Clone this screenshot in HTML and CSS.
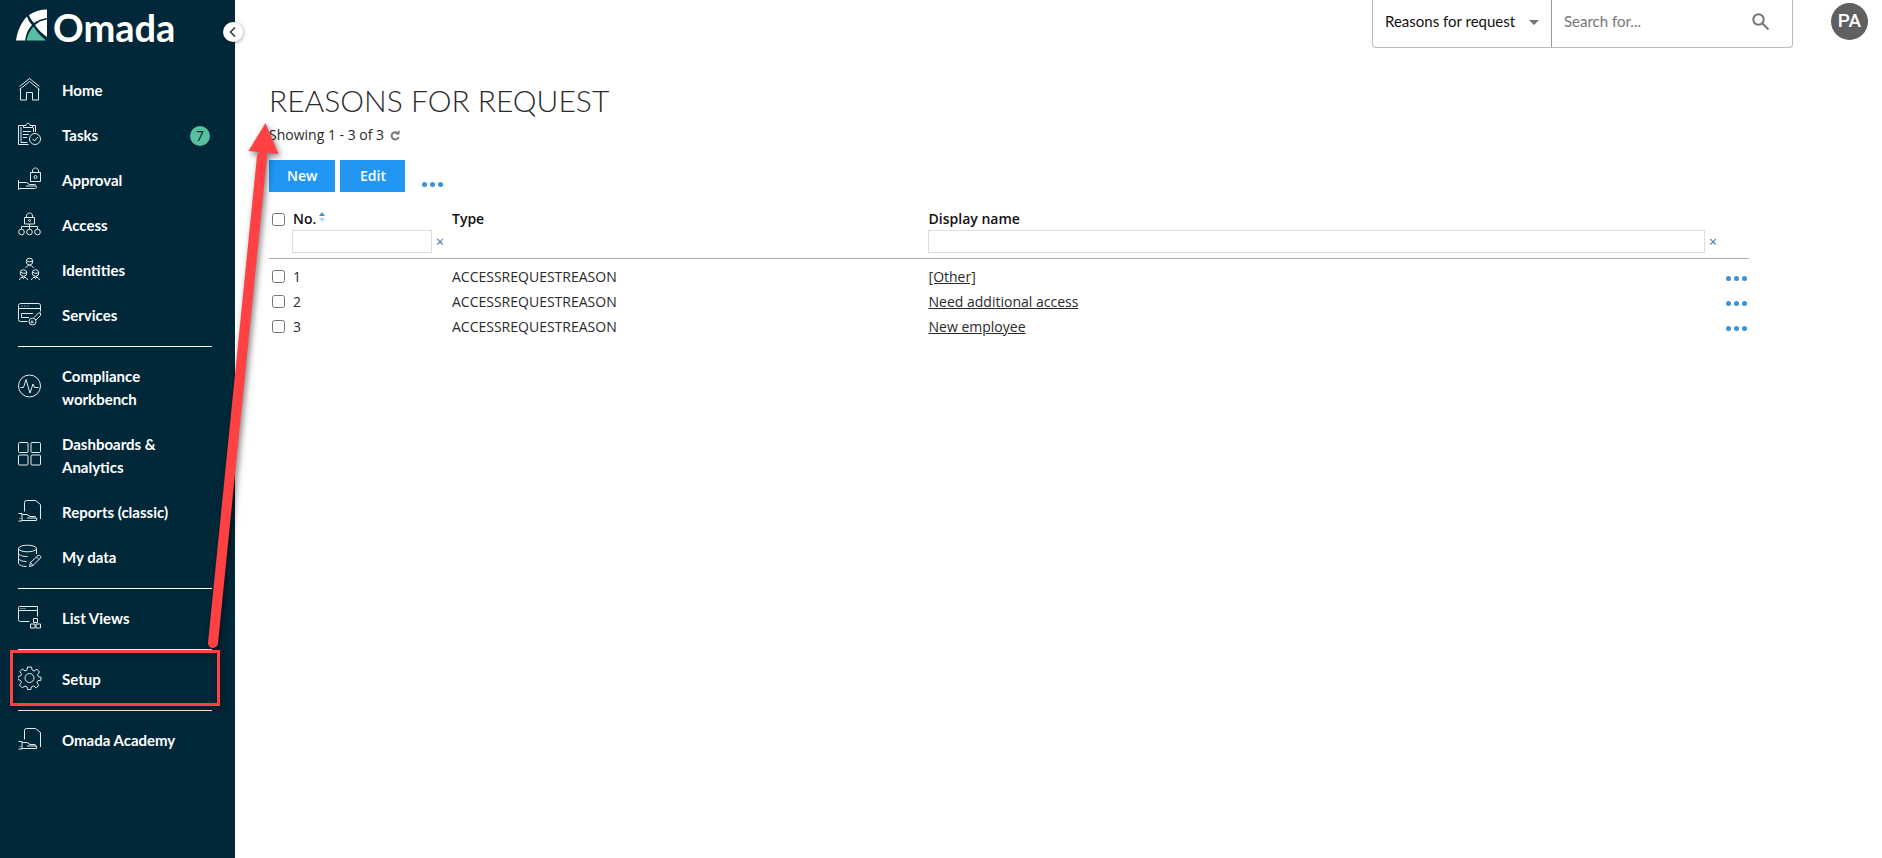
FILE: index.html
```html
<!DOCTYPE html>
<html lang="en">
<head>
    <meta charset="UTF-8">
    <meta name="viewport" content="width=device-width, initial-scale=1.0">
    <title>Reasons for request - Omada</title>
    <link rel="stylesheet" href="styles.css">
</head>
<body>

    <aside class="sidebar">
        <a class="logo" href="#">
            <svg class="logo-mark" viewBox="0 0 32 32">
                <path fill="#fff" d="M13 6C18 2.500 24 .5 31 .5V9C26 9.500 21.500 11.500 18 14 15.500 11.500 14 9 13 6z"/>
                <path fill="#fff" d="M11 7.500C12 11 14 14 16 16 12 20 10 25 9 31.500H0C1.500 22 5 13.500 11 7.500z"/>
                <path fill="#fff" d="M19 16C22.500 13 26.500 11 31 10.500V28C26 24.500 22 20.500 19 16z"/>
                <path fill="#57bf9f" d="M17.500 17.500C20.500 22.500 25 27.500 30 31.500H10.500C11.500 26 14 21 17.500 17.500z"/>
            </svg>
            <span class="logo-text">Omada</span>
        </a>
        <button class="collapse" type="button" aria-label="Collapse menu">
            <svg viewBox="0 0 10 10"><path d="M7 .5 2.500 5 7 9.500"/></svg>
        </button>

        <nav class="menu">
            <a href="#">
                <svg class="icon" viewBox="0 0 24 24"><path d="M1.500 9.500 11.500 1.500l10 8M1.500 12.500l10-8 10 8M2.500 12v11h6v-7.500h6V23h6V12"/></svg>
                <span>Home</span>
            </a>
            <a href="#">
                <svg class="icon" viewBox="0 0 24 24"><path d="M5 3.500H.5v19h10M3 5v15.500h6.500M14 3.500h3.500V10M15.500 5.500V10M5.500 5.500v-2h2.500c0-3 4-3 4 0h2.500v2zM5 9.500h8M5 12.500h6M5 15.500h4"/><circle cx="17" cy="17" r="5.500"/><path d="m14.500 17 2 2 3.500-4"/></svg>
                <span>Tasks</span>
                <b class="count">7</b>
            </a>
            <a href="#">
                <svg class="icon" viewBox="0 0 24 24"><path d="M12.500 5.500h10v9h-10zM14.500 5.500V4c0-4 6-4 6 0v1.500M.5 13v10M.5 15.500h8l3 2h5c2 0 2 1.500 0 1.500H8M.5 21.500h16c3 0 3-2.500.5-2.500"/><circle cx="17.500" cy="10" r="1.500"/></svg>
                <span>Approval</span>
            </a>
            <a href="#">
                <svg class="icon" viewBox="0 0 24 24"><path d="M6.500 5.500h10v6.500h-10zM8.500 5.500V4c0-4 6-4 6 0v1.500M11.500 12v5M3.500 17v-2.500h16V17"/><circle cx="11.500" cy="8.500" r="1"/><circle cx="3.500" cy="20" r="2.800"/><circle cx="11.500" cy="20" r="2.800"/><circle cx="19.500" cy="20" r="2.800"/></svg>
                <span>Access</span>
            </a>
            <a href="#">
                <svg class="icon" viewBox="0 0 24 24"><circle cx="11.500" cy="4.500" r="3.300"/><path d="M8.500 3.500c2 2 4 1 6 1M7.500 11c1-2 2.500-2.500 4-2.500s3 .5 4 2.500"/><circle cx="5.500" cy="16" r="3.300"/><path d="M2.500 15c2 2 4 1 6 1M1.500 23c.5-2 2-3 4-3s3.500 1 4 3M4 20l1.500 1.500L7 20"/><circle cx="17.500" cy="16" r="3.300"/><path d="M14.500 15c2 2 4 1 6 1M13.500 23c.5-2 2-3 4-3s3.500 1 4 3M16 20l1.500 1.500L19 20"/></svg>
                <span>Identities</span>
            </a>
            <a href="#">
                <svg class="icon" viewBox="0 0 24 24"><path d="M9.500 19.500h-7q-2 0-2-2v-14q0-2 2-2h18q2 0 2 2v6M.5 6.500h22M3.500 4h1M6.500 4h1M9.500 4h1M15 11.500H3.500v4H11M16 15.500l4.500-4.500h2v2.500l-4.500 4.500"/><circle cx="14.500" cy="19.500" r="3.500"/><circle cx="14" cy="20" r="1"/></svg>
                <span>Services</span>
            </a>
            <hr>
            <a href="#">
                <svg class="icon" viewBox="0 0 24 24"><circle cx="11.500" cy="12" r="11"/><path d="M2.500 13.500h3l2.500-8 4 13.500 3-9 1.500 3.500h4"/></svg>
                <span>Compliance workbench</span>
            </a>
            <a href="#">
                <svg class="icon" viewBox="0 0 24 24"><rect x=".5" y=".5" width="9.500" height="10" rx="1"/><rect x="13" y=".5" width="9.500" height="10" rx="1"/><rect x=".5" y="13" width="9.500" height="10" rx="1"/><rect x="13" y="13" width="9.500" height="10" rx="1"/></svg>
                <span>Dashboards &amp; Analytics</span>
            </a>
            <a href="#">
                <svg class="icon" viewBox="0 0 24 24"><path d="M6.500 12.500v-9q0-2 2-2h9l5 4V20M.5 14.500h3.500v7.500H.5M4 15.500h5l3 2h4q2 0 2 1.500H9M4 21.500h14.500q1-2.500-1-2.500M1.500 19.500h1"/></svg>
                <span>Reports (classic)</span>
            </a>
            <a href="#">
                <svg class="icon" viewBox="0 0 24 24"><ellipse cx="9.500" cy="4.500" rx="9" ry="3.300"/><path d="M18.500 4.500V10M.5 4.500v15c1 2 4 3 8 3M.5 9.500c1 2 4 3 9 3M.5 14.500c1 2 4 3 8 3M11.500 22.500l1-4 7.500-7c1.500-1 3.500.5 2.500 2.500L15 21.500zM18.500 13l2.500 2.500M12.500 18.500l2.500 3"/></svg>
                <span>My data</span>
            </a>
            <hr>
            <a href="#">
                <svg class="icon" viewBox="0 0 24 24"><path d="M11.500 16.500h-9q-2 0-2-2v-12q0-1 1-1h18v10M.5 5.500h19M2.500 3.500h1M4.500 3.500h1M6.500 3.500h1M15.500 13.500h4v4h-4zM12.500 19h4.500v4h-4.500zM18 19h4.500v4H18z"/></svg>
                <span>List Views</span>
            </a>
            <hr>
            <a href="#">
                <svg class="icon" viewBox="0 0 24 24"><circle cx="11.500" cy="12" r="4.500"/><path d="M9.500 1h4l.7 3.200 2 .8L19 3.200 21.500 6l-2 2.700.8 2 2.700.5v3l-3 .5-1 2 1.800 2.800-2.500 2.300-2.700-1.800-2.200.9-.6 2.600H9.500L9 20.900l-2-.9-2.800 1.800L1.500 19l1.900-2.600-.9-2.100L0 13.700v-3.200l2.700-.6.8-2L1.800 5.500 4.200 3 7 4.900l2-.8z"/></svg>
                <span>Setup</span>
            </a>
            <hr>
            <a href="#">
                <svg class="icon" viewBox="0 0 24 24"><path d="M6.500 12.500v-9q0-2 2-2h9l5 4V20M.5 14.500h3.500v7.500H.5M4 15.500h5l3 2h4q2 0 2 1.500H9M4 21.500h14.500q1-2.500-1-2.500M1.500 19.500h1"/></svg>
                <span>Omada Academy</span>
            </a>
        </nav>
    </aside>

    <div class="page">
        <header class="topbar">
            <form class="search">
                <div class="scope">
                    <select aria-label="Search scope">
                        <option>Reasons for request</option>
                    </select>
                    <svg class="caret" viewBox="0 0 10 5"><path d="M0 0h10L5 5z"/></svg>
                </div>
                <input type="text" placeholder="Search for..." aria-label="Search for">
                <button type="button" aria-label="Search">
                    <svg viewBox="0 0 18 18"><circle cx="6.500" cy="6.500" r="5.200"/><path d="m10.500 10.500 6 6"/></svg>
                </button>
            </form>
            <button class="avatar" type="button">PA</button>
        </header>

        <main>
            <h1>REASONS FOR REQUEST</h1>
            <p class="showing">
                Showing 1 - 3 of 3
                <button type="button" aria-label="Refresh">
                    <svg viewBox="0 0 10 11"><path d="M7.500 3A3.600 3.600 0 1 0 8.600 7"/><path class="tip" d="M9.500 0v4.500H5z"/></svg>
                </button>
            </p>

            <div class="actions">
                <button class="btn" type="button">New</button>
                <button class="btn" type="button">Edit</button>
                <button class="dots" type="button" aria-label="More actions"><i></i><i></i><i></i></button>
            </div>

            <table class="list">
                <colgroup>
                    <col class="col-check">
                    <col class="col-no">
                    <col class="col-type">
                    <col>
                    <col class="col-more">
                </colgroup>
                <thead>
                    <tr>
                        <th><input type="checkbox" aria-label="Select all"></th>
                        <th>No.<svg class="sort" viewBox="0 0 6 10"><path fill="#3a8fd6" d="M0 4h6L3 0z"/><path fill="#b5d5f2" d="M0 6h6L3 10z"/></svg></th>
                        <th>Type</th>
                        <th>Display name</th>
                        <th></th>
                    </tr>
                    <tr class="filters">
                        <td></td>
                        <td><div class="filter"><input type="text" aria-label="Filter No."><button type="button" aria-label="Clear No.">×</button></div></td>
                        <td></td>
                        <td colspan="2"><div class="filter wide"><input type="text" aria-label="Filter Display name"><button type="button" aria-label="Clear Display name">×</button></div></td>
                    </tr>
                </thead>
                <tbody>
                    <tr>
                        <td><input type="checkbox" aria-label="Select 1"></td>
                        <td>1</td>
                        <td>ACCESSREQUESTREASON</td>
                        <td><a href="#">[Other]</a></td>
                        <td><button class="dots" type="button" aria-label="More for 1"><i></i><i></i><i></i></button></td>
                    </tr>
                    <tr>
                        <td><input type="checkbox" aria-label="Select 2"></td>
                        <td>2</td>
                        <td>ACCESSREQUESTREASON</td>
                        <td><a href="#">Need additional access</a></td>
                        <td><button class="dots" type="button" aria-label="More for 2"><i></i><i></i><i></i></button></td>
                    </tr>
                    <tr>
                        <td><input type="checkbox" aria-label="Select 3"></td>
                        <td>3</td>
                        <td>ACCESSREQUESTREASON</td>
                        <td><a href="#">New employee</a></td>
                        <td><button class="dots" type="button" aria-label="More for 3"><i></i><i></i><i></i></button></td>
                    </tr>
                </tbody>
            </table>
        </main>
    </div>

    <!-- Box round Setup and arrow to the list heading -->
    <svg class="callout" width="300" height="720" viewBox="0 0 300 720">
        <rect x="11.500" y="651.500" width="207" height="53"/>
        <path class="shaft" d="M213 643 262 156"/>
        <path class="head" d="M265.500 123 278.500 154 248.500 151z"/>
    </svg>

</body>
</html>
```

FILE: styles.css
```css
* {
    box-sizing: border-box;
}

body {
    margin: 0;
    min-height: 100vh;
    display: flex;
    position: relative;
    font-family: "Open Sans", "Noto Sans", sans-serif;
    font-size: 14px;
    color: #2a2a2a;
    background: #fff;
}

button {
    margin: 0;
    padding: 0;
    border: none;
    background: none;
    font: inherit;
    cursor: pointer;
}

/* Sidebar */
.sidebar {
    position: relative;
    flex: none;
    width: 235px;
    background: #002838;
    color: #fff;
    font-family: Lato, sans-serif;
}

.logo {
    display: flex;
    gap: 5px;
    height: 68px;
    padding: 9px 0 0 16px;
    color: #fff;
    text-decoration: none;
}

.logo-mark {
    width: 32px;
    height: 32px;
}

.logo-text {
    font-size: 38px;
    font-weight: 700;
    line-height: 36px;
}

.collapse {
    position: absolute;
    top: 22px;
    right: -8px;
    width: 20px;
    height: 20px;
    display: flex;
    align-items: center;
    justify-content: center;
    border-radius: 50%;
    background: #fff;
    box-shadow: 0 1px 4px rgba(0, 0, 0, 0.4);
}

.collapse svg {
    width: 10px;
    height: 10px;
    fill: none;
    stroke: #333;
    stroke-width: 1.500;
}

.menu a {
    display: flex;
    align-items: center;
    gap: 20px;
    padding: 11px 25px 11px 18px;
    color: #fff;
    font-size: 15px;
    font-weight: 700;
    line-height: 23px;
    text-decoration: none;
}

.menu span {
    flex: 1;
    padding-right: 20px;
}

.menu hr {
    height: 1px;
    margin: 8px 23px 7px 18px;
    border: none;
    background: #fff;
}

.icon {
    flex: none;
    width: 24px;
    height: 24px;
    margin: -3px 0 1px;
    fill: none;
    stroke: #e6ecee;
    stroke-width: 1;
}

.count {
    width: 20px;
    height: 20px;
    border-radius: 50%;
    background: #57bf9f;
    color: #10242c;
    font-size: 13px;
    font-weight: 400;
    line-height: 20px;
    text-align: center;
}

/* Top bar */
.page {
    flex: 1;
    min-width: 0;
}

.topbar {
    display: flex;
    justify-content: flex-end;
    align-items: flex-start;
    gap: 38px;
    height: 48px;
    padding-right: 14px;
    font-family: Lato, sans-serif;
}

.search {
    display: flex;
    width: 421px;
    height: 48px;
    border: 1px solid #bbb;
    border-top: none;
    border-radius: 0 0 4px 4px;
    font-size: 15px;
    padding-bottom: 4px;
}

.scope {
    position: relative;
    width: 179px;
    margin-bottom: -4px;
    border-right: 1px solid #999;
}

.scope select {
    width: 100%;
    height: 42px;
    padding: 0 30px 0 12px;
    border: none;
    background: none;
    color: #111;
    font: inherit;
    appearance: none;
}

.caret {
    position: absolute;
    top: 20px;
    right: 12px;
    width: 10px;
    height: 5px;
    fill: #757575;
    pointer-events: none;
}

.search input {
    flex: 1;
    min-width: 0;
    height: 42px;
    padding: 0 12px;
    border: none;
    background: none;
    color: #111;
    font: inherit;
}

.search input::placeholder {
    color: #757575;
}

.search button {
    display: flex;
    align-items: center;
    justify-content: center;
    width: 62px;
}

.search button svg {
    width: 18px;
    height: 18px;
    fill: none;
    stroke: #757575;
    stroke-width: 2;
}

.avatar {
    width: 37px;
    height: 37px;
    margin-top: 3px;
    padding-bottom: 2px;
    border-radius: 50%;
    background: #606060;
    color: #fff;
    font-family: Roboto, sans-serif;
    font-size: 19px;
    font-weight: 500;
}

/* List */
main {
    padding: 31px 133px 40px 34px;
}

h1 {
    margin: 0;
    font-family: Lato, sans-serif;
    font-size: 30px;
    font-weight: 300;
    line-height: 42px;
}

.showing {
    display: flex;
    align-items: center;
    gap: 6px;
    margin: 4px 0 15px;
    line-height: 20px;
}

.showing button {
    display: flex;
}

.showing svg {
    width: 10px;
    height: 11px;
    fill: none;
    stroke: #777;
    stroke-width: 2;
}

.showing .tip {
    fill: #777;
    stroke: none;
}

.actions {
    display: flex;
    gap: 5px;
    margin-bottom: 16px;
}

.btn {
    min-width: 65px;
    height: 32px;
    padding: 0 18px 1px;
    background: #2196f3;
    color: #fff;
    font-weight: 600;
}

.dots {
    display: flex;
    gap: 3px;
}

.dots i {
    width: 5px;
    height: 5px;
    border-radius: 50%;
    background: #3a92d8;
}

.actions .dots {
    align-self: flex-end;
    margin: 0 0 5px 12px;
}

.list {
    width: 100%;
    table-layout: fixed;
    border-collapse: collapse;
}

.col-check {
    width: 23px;
}

.col-no {
    width: 159px;
}

.col-type {
    width: 32.200%;
}

.col-more {
    width: 24px;
}

.list th,
.list td {
    height: 25px;
    padding: 0 0 0 1px;
    text-align: left;
    vertical-align: middle;
    line-height: 20px;
}

.list th {
    height: 22px;
    font-weight: 600;
    color: #111;
}

.list input[type="checkbox"] {
    display: block;
    width: 13px;
    height: 13px;
    margin: 0 0 0 2px;
}

.sort {
    width: 6px;
    height: 10px;
    margin-left: 3px;
    vertical-align: 2px;
}

.list thead {
    border-bottom: 1px solid #aaa;
}

.list .filters td {
    height: 28px;
    padding: 0;
    vertical-align: top;
}

.filter {
    display: flex;
    align-items: center;
    gap: 4px;
}

.filter input {
    width: 140px;
    height: 23px;
    border: 1px solid #ddd;
    background: #fff;
}

.wide {
    padding-right: 32px;
}

.wide input {
    flex: 1;
}

.filter button {
    width: 8px;
    color: #3d6fa8;
    line-height: 20px;
}

.list tbody::before {
    content: "";
    display: table-row;
    height: 6px;
}

.list tbody a {
    color: #2a2a2a;
}

.list .dots {
    padding-top: 3px;
}

/* Callout over the page */
.callout {
    position: absolute;
    top: 0;
    left: 0;
    pointer-events: none;
    filter: drop-shadow(2px 3px 3px rgba(0, 0, 0, 0.5));
}

.callout rect {
    fill: none;
    stroke: #ff4144;
    stroke-width: 3;
}

.callout .shaft {
    fill: none;
    stroke: #ff4144;
    stroke-width: 10;
    stroke-linecap: round;
}

.callout .head {
    fill: #ff4144;
}
```
